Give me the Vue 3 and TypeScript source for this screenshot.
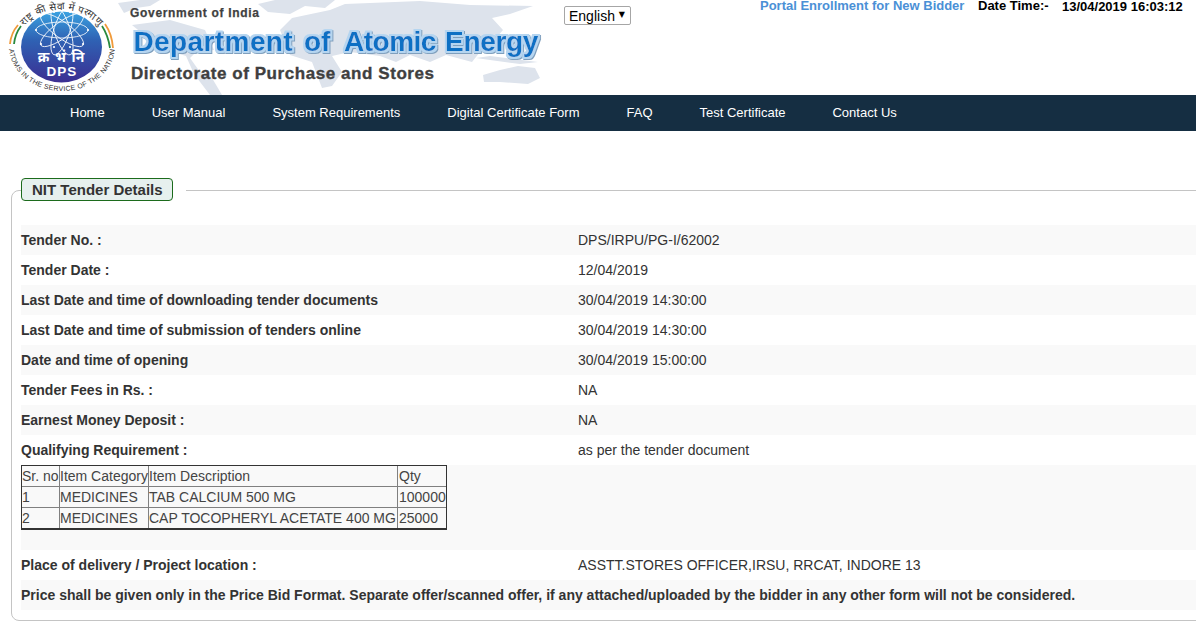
<script setup lang="ts">
interface Row {
  label: string;
  value: string;
}

const navItems = [
  'Home',
  'User Manual',
  'System Requirements',
  'Digital Certificate Form',
  'FAQ',
  'Test Certificate',
  'Contact Us',
];

const topRows: Row[] = [
  { label: 'Tender No. :', value: 'DPS/IRPU/PG-I/62002' },
  { label: 'Tender Date :', value: '12/04/2019' },
  { label: 'Last Date and time of downloading tender documents', value: '30/04/2019 14:30:00' },
  { label: 'Last Date and time of submission of tenders online', value: '30/04/2019 14:30:00' },
  { label: 'Date and time of opening', value: '30/04/2019 15:00:00' },
  { label: 'Tender Fees in Rs. :', value: 'NA' },
  { label: 'Earnest Money Deposit :', value: 'NA' },
  { label: 'Qualifying Requirement :', value: 'as per the tender document' },
];

const items = [
  { no: '1', category: 'MEDICINES', description: 'TAB CALCIUM 500 MG', qty: '100000' },
  { no: '2', category: 'MEDICINES', description: 'CAP TOCOPHERYL ACETATE 400 MG', qty: '25000' },
];

const petals = [0, 36, 72, 108, 144];
const tips = [
  [36, 30], [88, 30], [41, 16], [83, 16], [41, 44], [83, 44], [54, 12], [70, 12], [54, 47], [70, 47],
];
</script>

<template>
  <div class="page">
    <header class="top">
      <svg class="banner" width="545" height="95" viewBox="0 0 545 95">
        <defs>
          <linearGradient id="disc" x1="0" y1="0" x2="0" y2="1">
            <stop offset="0" stop-color="#3aa2e0" />
            <stop offset="0.4" stop-color="#2f62b4" />
            <stop offset="1" stop-color="#3b2e92" />
          </linearGradient>
          <path id="ringTop" d="M17 46 A44.5 36.5 0 0 1 106 46" />
          <path id="ringBottom" d="M9 46 A53 45 0 0 0 115 46" />
          <filter id="deptGlow" x="-5%" y="-30%" width="110%" height="160%">
            <feMorphology in="SourceAlpha" operator="dilate" radius="2" result="wide" />
            <feOffset in="wide" dx="0.6" dy="0.8" result="shifted" />
            <feFlood flood-color="#7f9fbd" />
            <feComposite in2="shifted" operator="in" result="edge" />
            <feFlood flood-color="#b5d5f0" />
            <feComposite in2="wide" operator="in" result="halo" />
            <feMorphology in="SourceGraphic" operator="dilate" radius="0.45" result="heavy" />
            <feMerge>
              <feMergeNode in="edge" />
              <feMergeNode in="halo" />
              <feMergeNode in="heavy" />
            </feMerge>
          </filter>
        </defs>

        <g class="map">
          <path d="M118 3 L140 0 L160 0 L150 6 L136 8 L124 13 Z" />
          <path d="M258 4 L275 0 L335 0 L325 8 L305 6 L290 14 L268 12 Z" />
          <path d="M132 25 L170 20 L205 30 L214 50 L196 52 L190 58 L200 72 L212 78 L222 95 L210 95 L194 74 L186 56 L160 48 Z" />
          <path d="M292 18 L330 10 L345 4 L420 1 L470 5 L533 6 L510 14 L492 18 L503 30 L490 45 L480 52 L472 62 L446 55 L430 62 L410 55 L396 62 L380 56 L350 52 L332 56 L342 72 L332 86 L322 88 L312 62 L290 55 L280 30 Z" />
          <path d="M483 75 L500 70 L518 66 L535 68 L540 78 L528 84 L500 82 L484 82 Z" />
          <path d="M476 58 L490 56 L538 62 L520 64 L490 60 Z" />
        </g>

        <ellipse cx="61.5" cy="47" rx="40.5" ry="35.5" fill="url(#disc)" />
        <g fill="none" stroke="#fff" stroke-width="0.8">
          <ellipse v-for="a in petals" :key="a" cx="62" cy="30" rx="26" ry="8" :transform="`rotate(${a} 62 30)`" />
        </g>
        <circle v-for="t in tips" :key="t.join()" :cx="t[0]" :cy="t[1]" r="1.1" fill="#fff" />
        <path d="M18 25 Q11 33 10 44" fill="none" stroke="#f09a3a" stroke-width="1.8" />
        <path d="M21 26 Q15 34 14 44" fill="none" stroke="#2a8a3e" stroke-width="1.8" />
        <path d="M105 24 Q112 34 113 48" fill="none" stroke="#f09a3a" stroke-width="1.8" />
        <path d="M102 26 Q108 35 110 48" fill="none" stroke="#2a8a3e" stroke-width="1.8" />
        <text class="seal-hi" x="61" y="62" text-anchor="middle">क्र भं नि</text>
        <text class="seal-dps" x="62" y="76" text-anchor="middle">DPS</text>
        <text class="seal-ring seal-top"><textPath href="#ringTop" startOffset="50%" text-anchor="middle">राष्ट्र की सेवा में परमाणु</textPath></text>
        <text class="seal-ring"><textPath href="#ringBottom" startOffset="50%" text-anchor="middle">ATOMS IN THE SERVICE OF THE NATION</textPath></text>

        <text class="gov" x="130" y="16.5" textLength="129">Government of India</text>
        <text class="dept" y="50.5" filter="url(#deptGlow)"><tspan class="w-dept" x="133.5">Department</tspan> <tspan x="304">of</tspan> <tspan class="w-atomic" x="344">Atomic</tspan> <tspan class="w-energy" x="445">Energy</tspan></text>
        <text class="dir" x="131" y="78.5" textLength="303">Directorate of Purchase and Stores</text>
      </svg>

      <div class="lang">
        <select class="lang-select" aria-label="Language">
          <option>English</option>
        </select>
        <span class="lang-caret">▼</span>
      </div>

      <div class="top-right">
        <a class="enroll" href="#">Portal Enrollment for New Bidder</a>
        <span class="clock-label">Date Time:-</span>
        <span class="clock">13/04/2019 16:03:12</span>
      </div>
    </header>

    <nav class="nav">
      <a v-for="item in navItems" :key="item" href="#">{{ item }}</a>
    </nav>

    <fieldset class="details">
      <legend><span>NIT Tender Details</span></legend>

      <div v-for="row in topRows" :key="row.label" class="row">
        <div class="label">{{ row.label }}</div>
        <div class="value">{{ row.value }}</div>
      </div>

      <div class="row row-table">
        <table class="items">
          <colgroup>
            <col class="col-no" />
            <col class="col-cat" />
            <col class="col-desc" />
            <col class="col-qty" />
          </colgroup>
          <thead>
            <tr>
              <td>Sr. no</td>
              <td>Item Category</td>
              <td>Item Description</td>
              <td>Qty</td>
            </tr>
          </thead>
          <tbody>
            <tr v-for="item in items" :key="item.no">
              <td>{{ item.no }}</td>
              <td>{{ item.category }}</td>
              <td>{{ item.description }}</td>
              <td>{{ item.qty }}</td>
            </tr>
          </tbody>
        </table>
      </div>

      <div class="row">
        <div class="label">Place of delivery / Project location :</div>
        <div class="value">ASSTT.STORES OFFICER,IRSU, RRCAT, INDORE 13</div>
      </div>
      <div class="row">
        <div class="label label-wide">Price shall be given only in the Price Bid Format. Separate offer/scanned offer, if any attached/uploaded by the bidder in any other form will not be considered.</div>
      </div>
    </fieldset>
  </div>
</template>

<style>
html,
body {
  background: #fff;
  overflow: hidden;
}
</style>

<style scoped>
.page {
  width: 1196px;
  height: 634px;
  overflow: hidden;
  font-family: "Liberation Sans", Arial, sans-serif;
  font-size: 14px;
  color: #333;
}

.top {
  display: flex;
  height: 95px;
}

.banner {
  flex: none;
  display: block;
}

.map path {
  fill: #dde3ec;
}

.seal-hi {
  font: bold 14px "Noto Sans", "DejaVu Sans", sans-serif;
  fill: #fff;
  word-spacing: 2px;
}

.seal-dps {
  font: bold 13.5px "Liberation Sans", sans-serif;
  fill: #fff;
  letter-spacing: 1px;
}

.seal-ring {
  font: 7px "Liberation Sans", sans-serif;
  fill: #333;
  letter-spacing: 0.3px;
}

.seal-top {
  font-size: 10px;
  letter-spacing: 0;
}

.gov {
  font: bold 12px "Liberation Sans", sans-serif;
  fill: #3f3f3f;
  stroke: #3f3f3f;
  stroke-width: 0.25px;
}

.dept {
  font: bold 28px "Liberation Sans", sans-serif;
  fill: #0a70c4;
}

.w-dept {
  letter-spacing: 0.4px;
}

.w-atomic {
  letter-spacing: -0.5px;
}

.w-energy {
  letter-spacing: -0.3px;
}

.dir {
  font: bold 17px "Liberation Sans", sans-serif;
  fill: #3f3f3f;
  stroke: #3f3f3f;
  stroke-width: 0.35px;
}

.lang {
  position: relative;
  height: 19px;
  margin: 6px 0 0 19px;
}

.lang-select {
  appearance: none;
  display: block;
  width: 67px;
  height: 19px;
  padding: 0 0 0 4px;
  border: 1px solid #a6a6a6;
  border-radius: 2px;
  background: #fff;
  color: #000;
  font: 14px "Liberation Sans", sans-serif;
}

.lang-caret {
  position: absolute;
  top: 4px;
  right: 6px;
  color: #000;
  font: 8px "DejaVu Sans", sans-serif;
  pointer-events: none;
}

.top-right {
  display: flex;
  margin-left: 129px;
  font-size: 13px;
  font-weight: bold;
  color: #000;
  white-space: nowrap;
  line-height: 12px;
}

.enroll {
  color: #4a90d6;
  text-decoration: none;
  width: 218px;
}

.clock-label {
  width: 84px;
}

.clock {
  margin-top: 1px;
}

.nav {
  display: flex;
  gap: 47px;
  box-sizing: border-box;
  height: 36px;
  align-items: center;
  padding: 0 0 2px 70px;
  background: #152e42;
  font-size: 13px;
}

.nav a {
  color: #fff;
  text-decoration: none;
}

.details {
  box-sizing: border-box;
  margin: 47px -20px 0 11px;
  min-width: 0;
  padding: 23px 0 10px 9px;
  border: 1px solid #c4c4c4;
  border-radius: 8px;
}

.details legend {
  padding: 0 13px 1px 0;
}

.details legend span {
  display: block;
  box-sizing: border-box;
  height: 23px;
  padding: 0 9px 0 10px;
  border: 1px solid #1c6b1c;
  border-radius: 4px;
  background: #e6f0ee;
  font-size: 15px;
  font-weight: bold;
  line-height: 21px;
}

.row {
  display: flex;
  height: 30px;
  align-items: center;
}

.row:nth-child(even) {
  background: #f9f9f9;
}

.label {
  width: 557px;
  flex: none;
  font-weight: bold;
}

.label-wide {
  width: auto;
  white-space: nowrap;
}

.row-table {
  display: block;
  height: 85px;
}

.items {
  box-sizing: border-box;
  width: 426px;
  table-layout: fixed;
  border-collapse: separate;
  border-spacing: 0;
  border: 1px solid #333;
  border-bottom-width: 2px;
  color: #444;
  line-height: 20px;
  white-space: nowrap;
}

.col-no {
  width: 37px;
}

.col-cat {
  width: 89px;
}

.col-desc {
  width: 249px;
}

.items td {
  padding: 0;
  border-left: 1px solid #808080;
  border-top: 1px solid #808080;
}

.items td:first-child {
  border-left: 0;
}

.items td:last-child {
  padding-left: 1px;
}

.items thead td {
  border-top: 0;
}
</style>
